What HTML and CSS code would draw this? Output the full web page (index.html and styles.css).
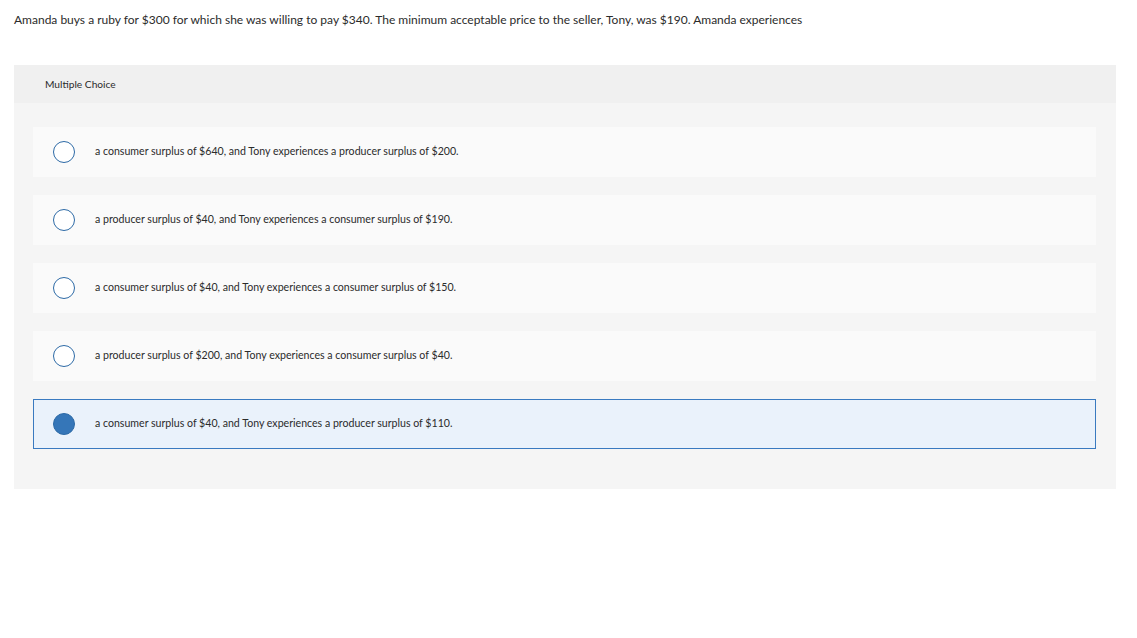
FILE: index.html
```html
<!DOCTYPE html>
<html lang="en">
  <head>
    <meta charset="UTF-8" />
    <meta name="viewport" content="width=device-width, initial-scale=1.0" />
    <title>Multiple Choice</title>
    <link rel="stylesheet" href="styles.css">
  </head>
  <body>
    <main class="question">
      <p class="prompt">
        Amanda buys a ruby for $300 for which she was willing to pay $340. The minimum acceptable price to the seller, Tony, was $190. Amanda experiences
      </p>
      <section class="panel">
        <div class="panel_head">Multiple Choice</div>
        <ul class="choices">
          <li class="choice">
            <span class="radio"></span>
            <span class="label">a consumer surplus of $640, and Tony experiences a producer surplus of $200.</span>
          </li>
          <li class="choice">
            <span class="radio"></span>
            <span class="label">a producer surplus of $40, and Tony experiences a consumer surplus of $190.</span>
          </li>
          <li class="choice">
            <span class="radio"></span>
            <span class="label">a consumer surplus of $40, and Tony experiences a consumer surplus of $150.</span>
          </li>
          <li class="choice">
            <span class="radio"></span>
            <span class="label">a producer surplus of $200, and Tony experiences a consumer surplus of $40.</span>
          </li>
          <li class="choice selected">
            <span class="radio"></span>
            <span class="label">a consumer surplus of $40, and Tony experiences a producer surplus of $110.</span>
          </li>
        </ul>
      </section>
    </main>
  </body>
</html>
```

FILE: styles.css
```css
* {
  margin: 0;
  padding: 0;
  box-sizing: border-box;
  list-style-type: none;
}

body {
  background-color: #ffffff;
  font-family: Lato, 'Open Sans', sans-serif;
  color: #2b2b2b;
}
.question {
  padding: 12px 21px 0 14px;
}
.prompt {
  font-size: 12px;
  line-height: 15px;
  margin-bottom: 38px;
}
.panel {
  background-color: #f5f5f5;
  padding-bottom: 40px;
}
.panel_head {
  background-color: #f0f0f0;
  height: 38px;
  padding-left: 31px;
  display: flex;
  align-items: center;
  font-size: 10.2px;
}
.choices {
  display: flex;
  flex-direction: column;
  gap: 18px;
  padding: 24px 20px 0 19px;
}
.choice {
  display: flex;
  align-items: center;
  height: 50px;
  padding-left: 19px;
  background-color: #fafafa;
  border: 1px solid transparent;
  font-size: 10.6px;
}
.label {
  margin-top: -2px;
}
.radio {
  width: 22px;
  height: 22px;
  border-radius: 50%;
  border: 1.5px solid #2d6aa6;
  background-color: #ffffff;
  margin-right: 20px;
  flex-shrink: 0;
}
.selected {
  background-color: #eaf2fb;
  border-color: #3a7ac0;
}
.selected .radio {
  background-color: #3576b8;
  border-color: #2d6aa6;
}
```
